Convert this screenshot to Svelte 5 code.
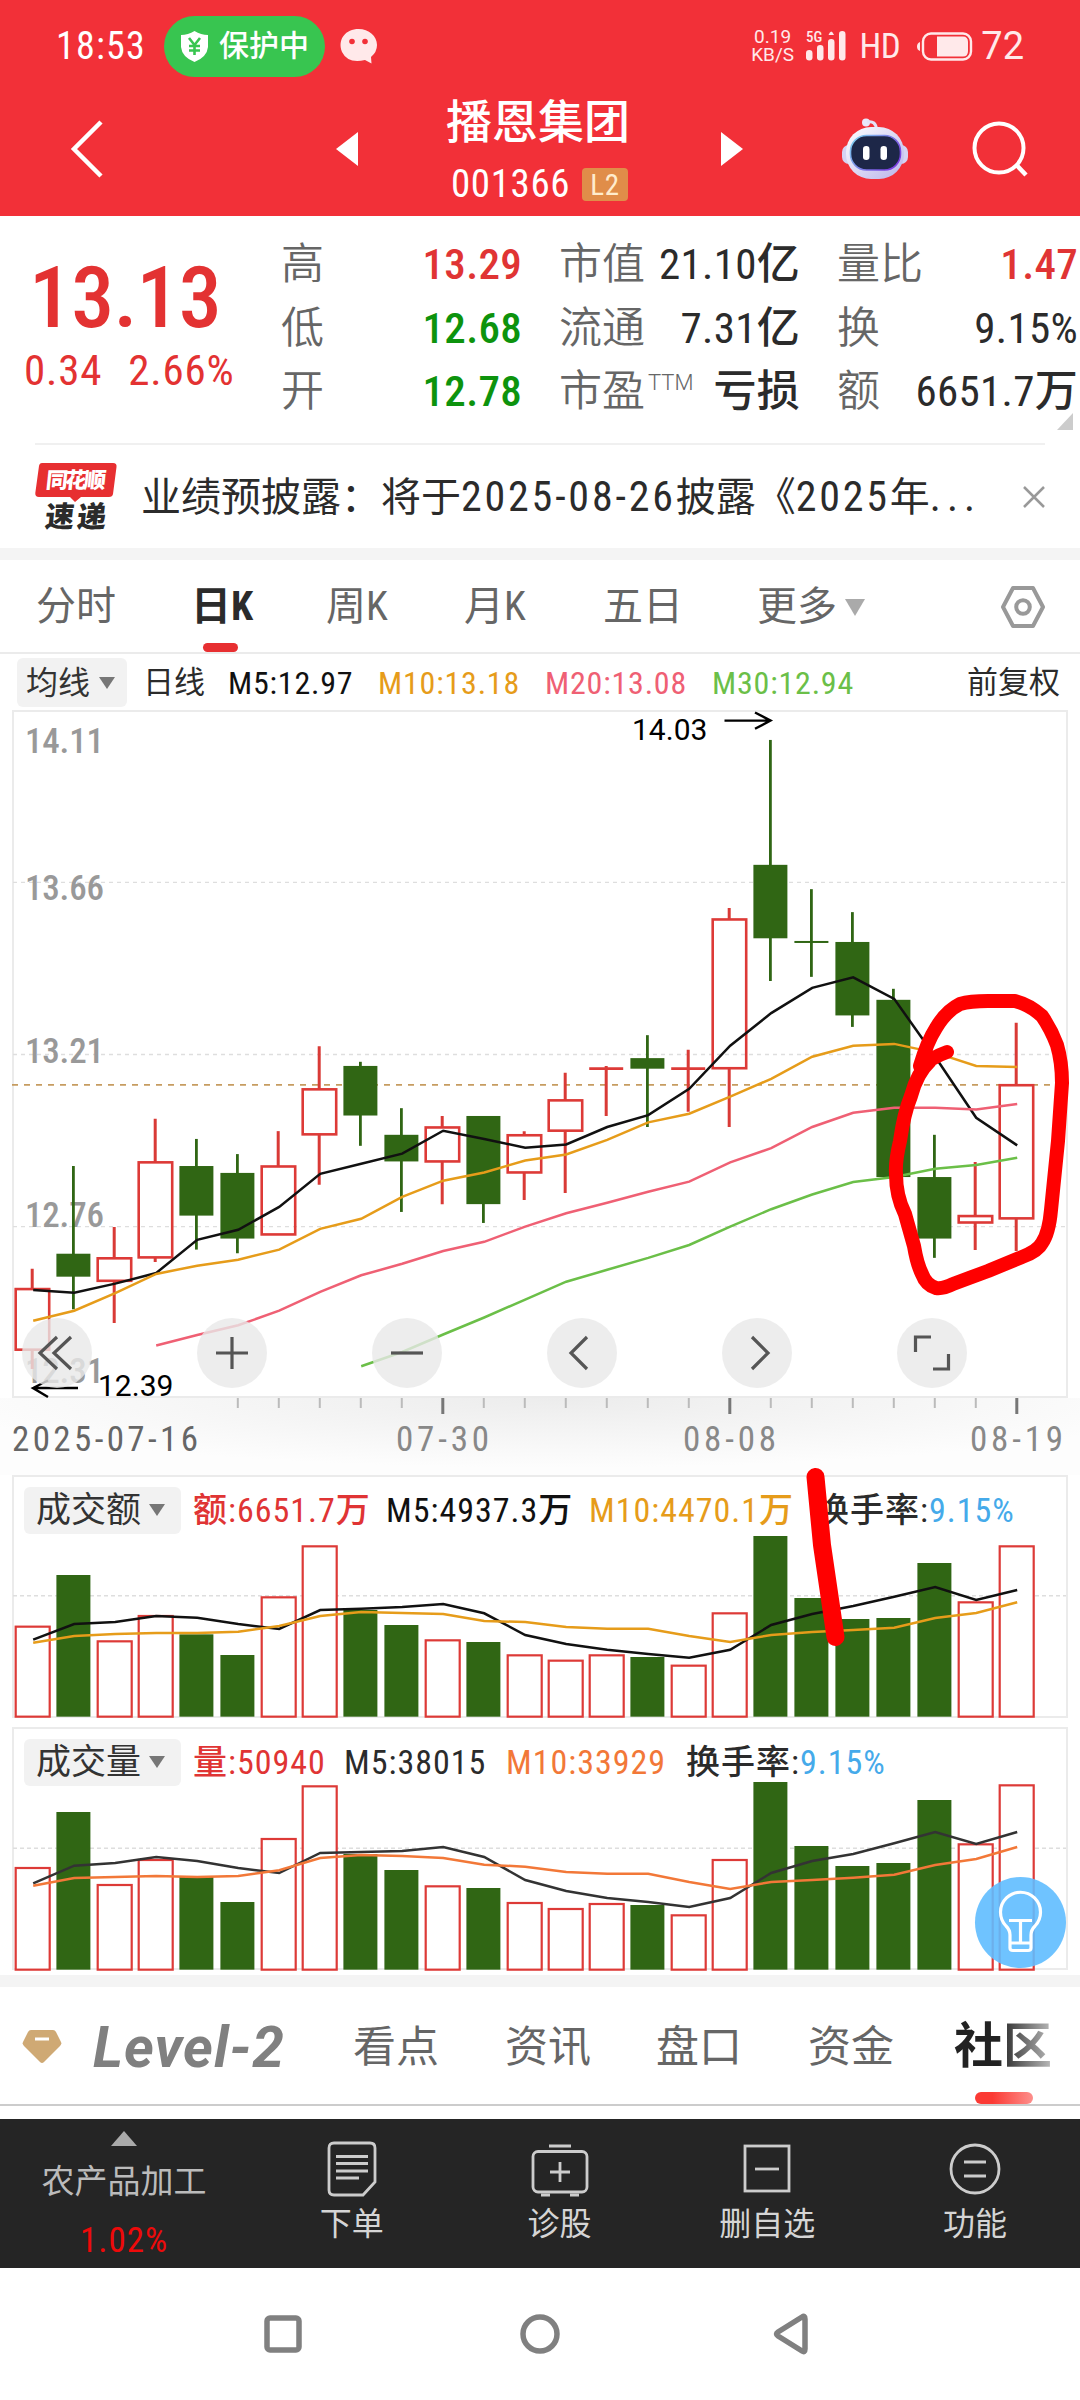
<script>
  const stats = [
    [
      { label: '高', value: '13.29', tone: 'up' },
      { label: '低', value: '12.68', tone: 'down' },
      { label: '开', value: '12.78', tone: 'down' },
    ],
    [
      { label: '市值', value: '21.10亿' },
      { label: '流通', value: '7.31亿' },
      { label: '市盈', sup: 'TTM', value: '亏损' },
    ],
    [
      { label: '量比', value: '1.47', tone: 'up' },
      { label: '换', value: '9.15%' },
      { label: '额', value: '6651.7万' },
    ],
  ];

  // Horizontal position of the n-th trading day.
  const cx = (i) => 32.2 + i * 41;

  // kind, high, body top, body bottom, low (2.178 units per pixel)
  const candles = [
    ['r', 1239, 1283, 1415, 1457], ['g', 1015, 1206, 1256, 1327], ['r', 1148, 1216, 1265, 1357],
    ['r', 912, 1007, 1214, 1224], ['g', 956, 1015, 1123, 1197], ['g', 989, 1030, 1173, 1205],
    ['r', 939, 1016, 1164, 1164], ['r', 754, 848, 946, 1056], ['g', 788, 797, 905, 971],
    ['g', 889, 947, 1005, 1115], ['r', 906, 931, 1005, 1098], ['g', 906, 906, 1098, 1139],
    ['r', 939, 948, 1029, 1089], ['r', 812, 872, 938, 1074], ['r', 797, 803, 803, 906],
    ['g', 730, 780, 803, 930], ['r', 762, 803, 803, 897], ['r', 453, 478, 802, 930],
    ['g', 87, 359, 519, 612], ['g', 412, 527, 527, 603], ['g', 462, 527, 687, 712],
    ['g', 629, 653, 1039, 1039], ['g', 947, 1039, 1173, 1215], ['r', 1006, 1124, 1138, 1198],
    ['r', 703, 839, 1129, 1200],
  ];
  const py = (v) => v / 2.178 - 11;

  const averages = [
    { color: '#111', from: 0, v: [1285, 1291, 1271, 1248, 1176, 1154, 1104, 1032, 1010, 988, 938, 956, 975, 968, 930, 904, 847, 753, 682, 627, 604, 651, 777, 910, 970] },
    { color: '#e69c1a', from: 0, v: [1352, 1330, 1292, 1250, 1232, 1219, 1197, 1152, 1130, 1082, 1047, 1029, 1003, 990, 958, 920, 901, 864, 825, 777, 753, 749, 768, 797, 799] },
    { color: '#ef6074', from: 3, v: [1406, 1383, 1362, 1330, 1289, 1253, 1228, 1200, 1180, 1147, 1118, 1095, 1071, 1049, 1007, 976, 930, 899, 888, 888, 892, 880] },
    { color: '#6bbf48', from: 8, v: [1451, 1420, 1382, 1345, 1306, 1267, 1241, 1215, 1187, 1147, 1109, 1077, 1050, 1039, 1021, 1013, 997] },
  ];
  const line = (v, from, f) => v.map((n, i) => `${cx(i + from).toFixed(1)},${f(n).toFixed(1)}`).join(' ');

  const grid = [882.3, 1054.5, 1226.6].map((y) => y - 711);
  const prices = [['14.11', 752.5], ['13.66', 900], ['13.21', 1063], ['12.76', 1227], ['12.31', 1383]];

  const panels = [
    {
      name: '成交额', top: 1475, base: 1380, floor: 1010, mid: 647, height: 243, colors: ['#111', '#e69c1a'],
      cells: [['额:6651.7万', 'up', 193], ['M5:4937.3万', 'm5', 203], ['M10:4470.1万', 'm10', 226]],
      bars: [740, 585, 784, 708, 763, 825, 652, 499, 690, 735, 781, 786, 826, 842, 826, 831, 857, 700, 468, 654, 717, 714, 549, 667, 499],
      m5: [779, 732, 726, 708, 713, 732, 747, 690, 686, 681, 672, 700, 765, 792, 809, 822, 833, 809, 735, 702, 678, 650, 621, 660, 630],
      m10: [788, 768, 762, 759, 759, 755, 738, 708, 696, 699, 702, 723, 726, 741, 746, 746, 768, 786, 765, 756, 750, 743, 714, 699, 667],
    },
    {
      name: '成交量', top: 1727, base: 1720, floor: 749, mid: 385, height: 243, colors: ['#333', '#f27838'],
      cells: [['量:50940', 'up', 151], ['M5:38015', 'dark', 162], ['M10:33929', 'orange', 180]],
      bars: [444, 276, 495, 420, 470, 546, 357, 199, 402, 450, 499, 504, 549, 567, 552, 555, 586, 420, 186, 378, 438, 429, 240, 373, 196],
      m5: [490, 437, 429, 411, 423, 444, 459, 399, 396, 393, 381, 411, 480, 513, 534, 546, 561, 534, 459, 423, 402, 370, 336, 372, 336],
      m10: [497, 474, 471, 468, 471, 468, 451, 414, 405, 408, 414, 434, 440, 456, 461, 461, 486, 507, 486, 480, 473, 464, 435, 417, 381],
    },
  ];

  const ticks = Array.from({ length: 20 }, (_, i) => i + 5);
  const major = [10, 17, 24];
</script>

<div class="page">
  <header>
    <div class="status">
      <span class="time">18:53</span>
      <span class="pill">
        <svg width="27" height="31" viewBox="0 0 27 31">
          <path d="M13.5 0Q20 4 27 4V16Q26 26 13.5 31Q1 26 0 16V4Q7 4 13.5 0Z" fill="#fff" />
          <path d="M8 7l5.500 7 5.500-7M13.500 14v10M8 15h11M8 19.500h11" fill="none" stroke="#38c550" stroke-width="2.600" />
        </svg>
        保护中
      </span>
      <svg class="chat" width="38" height="35" viewBox="0 0 38 35">
        <path d="M18.500 0C29 0 37 7 37 16Q37 23 31 28L31.500 34.500 25 31Q8 35 2 23C-3 10 6 0 18.500 0Z" fill="#ffe9ea" />
        <circle cx="12" cy="12.500" r="2.800" fill="#f23038" /><circle cx="25" cy="12.500" r="2.800" fill="#f23038" />
      </svg>
      <span class="rate"><span>0.19</span><span>KB/S</span></span>
      <svg class="signal" width="40" height="30" viewBox="0 0 40 30" fill="#ffe9ea">
        <text x="0" y="11" font-size="15" font-weight="500">5G</text>
        <rect y="19" width="6.500" height="10.500" rx="3.200" /><rect x="11" y="14" width="6.500" height="15.500" rx="3.200" />
        <rect x="22" y="8" width="6.500" height="21.500" rx="3.200" /><rect x="33" width="6.500" height="29.500" rx="3.200" />
        <path d="M22.500 4Q25.200-3 28 4Z" />
      </svg>
      <span class="hd">HD</span>
      <svg class="battery" width="56" height="29" viewBox="0 0 56 29">
        <path d="M3 10v9Q0 18 0 14.500T3 10Z" fill="#ffe9ea" />
        <rect x="6" y="1.500" width="48" height="26" rx="8" fill="none" stroke="#ffe9ea" stroke-width="2.400" />
        <path d="M20 4.500H46Q51 4.500 51 10V19Q51 24.500 46 24.500H20Z" fill="#ffe9ea" />
      </svg>
      <span class="level">72</span>
    </div>

    <div class="titlebar">
      <svg class="back" width="34" height="58" viewBox="0 0 34 58"><path d="M31 2L4 29 31 56" fill="none" stroke="#fff" stroke-width="4.500" /></svg>
      <svg width="22" height="34" viewBox="0 0 22 34"><path d="M22 0V34L0 17Z" fill="#fff" /></svg>
      <div class="title">
        <span class="name">播恩集团</span>
        <span class="code">001366 <b>L2</b></span>
      </div>
      <svg class="next" width="22" height="34" viewBox="0 0 22 34"><path d="M0 0L22 17 0 34Z" fill="#fff" /></svg>
      <svg width="66" height="62" viewBox="0 0 66 62">
        <defs>
          <linearGradient id="shell" x1="0" y1="0" x2="1" y2="1"><stop offset="0" stop-color="#fff" /><stop offset="1" stop-color="#b9b4ea" /></linearGradient>
          <linearGradient id="rim" x1="0" y1="0" x2="1" y2=".6"><stop offset="0" stop-color="#7fd8f0" /><stop offset="1" stop-color="#7a3fe0" /></linearGradient>
        </defs>
        <circle cx="24" cy="4.500" r="4" fill="#e9e8fa" />
        <path d="M25 4Q34 2 34.500 12" fill="none" stroke="#e4e2f8" stroke-width="3" />
        <rect x="0" y="27" width="66" height="19" rx="7" fill="#d5d3f3" />
        <rect x="4" y="9" width="58" height="52" rx="25" fill="url(#shell)" />
        <rect x="8.500" y="17.500" width="50" height="34.500" rx="16" fill="#1d2748" stroke="url(#rim)" stroke-width="1.600" />
        <rect x="21" y="28" width="6.500" height="14" rx="3.200" fill="#fff" /><rect x="38.500" y="28" width="6.500" height="14" rx="3.200" fill="#fff" />
      </svg>
      <svg width="56" height="56" viewBox="0 0 56 56"><circle cx="26" cy="27" r="24.500" fill="none" stroke="#fff" stroke-width="4" /><path d="M43 43.500L53 54" stroke="#fff" stroke-width="4.500" /></svg>
    </div>
  </header>

  <section class="quote">
    <div class="last">
      <span class="price">13.13</span>
      <span class="change"><span>0.34</span><span>2.66%</span></span>
    </div>
    {#each stats as column}
      <dl>
        {#each column as s}
          <div><dt>{s.label}{#if s.sup}<sup>{s.sup}</sup>{/if}</dt><dd class={s.tone}>{s.value}</dd></div>
        {/each}
      </dl>
    {/each}
    <i class="corner"></i>
  </section>

  <section class="news">
    <svg width="82" height="68" viewBox="0 0 82 68">
      <path d="M7 0H78Q82 0 81.500 4L78 31Q77.500 34 74 34H46L40 39 35 34H4Q0 34 .300 30L4 3Q4.500 0 7 0Z" fill="#e72f31" />
      <g transform="skewX(-6)" font-weight="900">
        <text x="13" y="25.500" font-size="22" textLength="60" fill="#fff">同花顺</text>
        <text x="16" y="64" font-size="29" textLength="61" fill="#2b2b2b">速递</text>
      </g>
    </svg>
    <p>业绩预披露：将于<span>2025-08-26</span>披露《<span>2025</span>年<span class="dots">...</span></p>
    <svg width="22" height="22" viewBox="0 0 22 22"><path d="M1 1L21 21M21 1L1 21" stroke="#999" stroke-width="2.500" /></svg>
  </section>

  <nav class="periods">
    <span>分时</span><span class="active">日K</span><span>周K</span><span>月K</span><span>五日</span><span class="more">更多<i></i></span>
    <svg width="46" height="44" viewBox="0 0 46 44" fill="none" stroke="#999" stroke-width="4"><path d="M13 3H33L43 22 33 41H13L3 22Z" stroke-linejoin="round" /><circle cx="23" cy="22" r="6.800" /></svg>
  </nav>

  <div class="legend">
    <span class="chip">均线<i></i></span><span class="dark">日线</span><span class="m5">M5:12.97</span><span class="m10">M10:13.18</span><span class="m20">M20:13.08</span><span class="m30">M30:12.94</span><span class="adjust">前复权</span>
  </div>

  <section class="chart">
    <svg width="1080" height="687" viewBox="0 0 1080 687">
      <rect x="13" y="0" width="1054" height="686" fill="none" stroke="#ebebeb" stroke-width="2" />
      {#each grid as y}<path d="M13 {y}H1066" stroke="#dedede" stroke-width="1.300" stroke-dasharray="4 4" />{/each}
      <path d="M12 373.800H1058" stroke="#c69c60" stroke-width="1.800" stroke-dasharray="6 6" />
      {#each prices as [label, y]}<text class="price-label" x="25" y={y - 711}>{label}</text>{/each}
      {#each candles as [kind, high, top, bottom, low], i}
        {#if kind === 'g'}
          <path d="M{cx(i) + .2} {py(high)}V{py(low)}" stroke="#306614" stroke-width="2.800" />
          <rect x={cx(i) - 16.8} y={py(top) - (top === bottom ? 1 : 0)} width="34" height={Math.max(2, py(bottom) - py(top))} fill="#306614" />
        {:else}
          <path d="M{cx(i)} {py(high)}V{py(top)}M{cx(i)} {py(bottom)}V{py(low)}" stroke="#d93a36" stroke-width="3" />
          {#if top === bottom}
            <path d="M{cx(i) - 17} {py(top)}h34" stroke="#dd3a37" stroke-width="2.800" />
          {:else}
            <rect x={cx(i) - 16.5} y={py(top)} width="33.500" height={py(bottom) - py(top)} fill="none" stroke="#dd3a37" stroke-width="2.600" />
          {/if}
        {/if}
      {/each}
      {#each averages as a}<polyline points={line(a.v, a.from, py)} transform="translate(1 0)" fill="none" stroke={a.color} stroke-width="2.500" />{/each}
      <g class="mark">
        <text x="632" y="29">14.03</text><path d="M724.500 9.600H770M755 1.500L770.500 9.600 755 17.800" />
        <text x="98" y="684.500">12.39</text><path d="M78 677H33M48 669.500L33 677 48 686" />
      </g>
    </svg>
    <div class="tools">
      <button aria-label="first"><svg viewBox="0 0 70 70"><path d="M35 19L18 35 35 51M49 19L32 35 49 51" /></svg></button>
      <button aria-label="zoom in"><svg viewBox="0 0 70 70"><path d="M19 35H51M35 19V51" /></svg></button>
      <button aria-label="zoom out"><svg viewBox="0 0 70 70"><path d="M19 35H51" /></svg></button>
      <button aria-label="previous"><svg viewBox="0 0 70 70"><path d="M40 19L24 35 40 51" /></svg></button>
      <button aria-label="next"><svg viewBox="0 0 70 70"><path d="M30 19L46 35 30 51" /></svg></button>
      <button aria-label="full screen"><svg viewBox="0 0 70 70"><path d="M34 19H18.500V34M36 51H51.500V36" /></svg></button>
    </div>
  </section>

  <svg class="dates" width="1080" height="77" viewBox="0 0 1080 77">
    {#each ticks as i}
      <path d="M{cx(i) + .6} 0V{major.includes(i) ? 16 : 10}" stroke={major.includes(i) ? '#777' : '#bbb'} stroke-width={major.includes(i) ? 3 : 2} />
    {/each}
    <text x="12" y="53" textLength="186" fill="#666">2025-07-16</text>
    <text x="396" y="53" textLength="93">07-30</text>
    <text x="683" y="53" textLength="93">08-08</text>
    <text x="970" y="53" textLength="93">08-19</text>
  </svg>

  {#each panels as p}
    {@const vy = (v) => p.base - p.top + v / 3}
    <section class="volume">
      <svg width="1080" height={p.height} viewBox="0 0 1080 {p.height}">
        <rect x="13" y="1" width="1054" height={p.height - 2} fill="none" stroke="#ebebeb" stroke-width="2" />
        <path d="M13 {vy(p.mid)}H1066" stroke="#dedede" stroke-width="1.500" stroke-dasharray="4 3" />
        {#each p.bars as v, i}
          {#if candles[i][0] === 'g'}
            <rect x={cx(i) - 16.8} y={vy(v)} width="34" height={vy(p.floor) - vy(v)} fill="#306614" />
          {:else}
            <rect x={cx(i) - 16.5} y={vy(v)} width="34" height={vy(p.floor) - vy(v)} fill="#fff" stroke="#dd3a37" stroke-width="2.200" />
          {/if}
        {/each}
        <g fill="none" stroke-width="2.500" transform="translate(1 0)">
          <polyline points={line(p.m5, 0, vy)} stroke={p.colors[0]} />
          <polyline points={line(p.m10, 0, vy)} stroke={p.colors[1]} />
        </g>
      </svg>
      <div class="volume-head">
        <span class="chip">{p.name}<i></i></span>
        {#each p.cells as [text, tone, width]}<span class="cell {tone}" style="width:{width}px">{text}</span>{/each}
        <span class="dark">换手率:<em>9.15%</em></span>
      </div>
    </section>
  {/each}

  <nav class="tabs">
    <svg width="40" height="36" viewBox="0 0 40 36"><path d="M9 1H31Q33 1 34 3L39 13Q40 15 38 17L22 33Q20 35 18 33L2 17Q0 15 1 13L6 3Q7 1 9 1Z" fill="#cfa974" /><path d="M13 10H27" stroke="#fff" stroke-width="3" /></svg>
    <span class="l2">Level-2</span>
    <span>看点</span><span>资讯</span><span>盘口</span><span>资金</span><span class="current"><b>社区</b></span>
  </nav>

  <footer>
    <div class="sector"><i></i><span>农产品加工</span><em>1.02%</em></div>
    <div class="action">
      <svg width="60" height="56" viewBox="0 0 60 56"><path d="M12 2H48Q53 2 53 7V41L41 54H12Q7 54 7 49V7Q7 2 12 2Z" /><path d="M14 15.500H46M14 22.500H46M14 30H46M14 37H37" /></svg>下单
    </div>
    <div class="action">
      <svg width="60" height="56" viewBox="0 0 60 56"><rect x="3" y="10.500" width="54" height="40.500" rx="5" /><path d="M19 5H41M30 21V41M20 31H40M11 54H20M40 54H49" /></svg>诊股
    </div>
    <div class="action">
      <svg width="60" height="56" viewBox="0 0 60 56"><rect x="8" y="5" width="44" height="45" /><path d="M18 28H42" /></svg>删自选
    </div>
    <div class="action">
      <svg width="60" height="56" viewBox="0 0 60 56"><circle cx="30" cy="28" r="24" /><path d="M19 21H41M19 35H41" /></svg>功能
    </div>
  </footer>

  <div class="system">
    <svg width="40" height="42" viewBox="0 0 40 42"><rect x="4" y="5" width="32" height="32" rx="3" /></svg>
    <svg width="42" height="42" viewBox="0 0 42 42"><circle cx="21" cy="21" r="17" /></svg>
    <svg width="36" height="42" viewBox="0 0 36 42"><path d="M29 4Q32 2 32 6V36Q32 40 29 38L5 23Q2 21 5 19Z" /></svg>
  </div>

  <div class="hint">
    <svg width="91" height="91" viewBox="0 0 91 91" fill="none" stroke="#fff" stroke-width="3.200">
      <path d="M35 65V58Q35 53 31 49A20 20 0 1 1 60 49Q56 53 56 58V65M34 43.500H57M45.500 44V66M35 66H56V71Q56 73.500 53 73.500H38Q35 73.500 35 71Z" />
    </svg>
  </div>

  <svg class="ink" width="1080" height="2400" viewBox="0 0 1080 2400">
    <path d="M947 1052Q930 1058 921 1068L920 1066Q927 1042 936 1028Q946 1011 960 1004Q970 1001 988 1001H1015Q1030 1005 1042 1016Q1051 1029 1057 1045Q1062 1062 1062 1083L1058 1141 1051 1210Q1049 1233 1042 1243Q1038 1251 1022 1257L988 1271 953 1284Q943 1289 936 1288Q926 1285 922 1274Q917 1264 914 1246L905 1214Q896 1196 896 1174Q895 1162 900 1141Q904 1113 911 1096Q917 1073 930 1061" stroke-width="14" />
    <path d="M815.500 1477L822 1545 835.500 1637" stroke-width="18" />
  </svg>
</div>

<style>
  :global(body) { background: #fff; }
  .page {
    position: relative; width: 1080px; height: 2400px; overflow: hidden; background: #fff; color: #2b2b2b;
    font-family: Roboto, "Noto Sans CJK SC", sans-serif; font-stretch: 75%; line-height: 1;
  }
  svg { display: block; flex: none; overflow: visible; }
  .up { color: #e03434; }
  .down { color: #0d930d; }
  .m5 { color: #111; }
  .m10 { color: #e69c1a; }
  .m20 { color: #ef6074; }
  .m30 { color: #6bbf48; }
  .dark { color: #2b2b2b; }
  .orange { color: #f27838; }

  header { height: 216px; background: #f23038; color: #fff; }
  .status { display: flex; align-items: center; height: 92px; padding: 0 56px; color: #ffe9ea; }
  .time { width: 108px; font-size: 38px; letter-spacing: 1.2px; color: #fff; }
  .pill { display: flex; align-items: center; gap: 11px; width: 161px; height: 61px; padding: 0 16px 0 17px; box-sizing: border-box; border-radius: 31px; background: #38c550; color: #fff; font-size: 30px; font-weight: 500; white-space: nowrap; }
  .chat { margin-left: 15px; }
  .rate { display: flex; flex-direction: column; align-items: center; gap: 0; width: 46px; margin-left: auto; font-size: 19px; font-stretch: 95%; font-weight: 450; line-height: 18px; }
  .signal { margin-left: 10px; }
  .hd { margin-left: 14px; font-size: 35px; letter-spacing: -.5px; }
  .battery { margin-left: 17px; }
  .level { margin-left: 8px; font-size: 38px; font-stretch: 95%; font-weight: 450; }
  .titlebar { display: grid; grid-template-columns: 336px 112px 180px 214px 131px 1fr; align-items: center; height: 114px; }
  .back { margin-left: 70px; }
  .next { margin-left: 93px; }
  .title { display: flex; flex-direction: column; align-items: center; gap: 23px; padding-top: 2px; }
  .name { font-size: 46px; font-weight: 500; white-space: nowrap; }
  .code { display: flex; align-items: center; justify-content: space-between; width: 177px; height: 33px; margin-left: 3px; font-size: 39px; font-weight: 450; letter-spacing: .6px; }
  .code b { width: 46px; height: 33px; border-radius: 4px; background: #e08d49; color: #ffeccd; font-size: 29px; font-weight: 400; line-height: 34px; text-align: center; }

  .quote { position: relative; display: flex; height: 227px; padding: 17px 0 0 19px; box-sizing: border-box; }
  .last { display: flex; flex: none; flex-direction: column; width: 262px; padding-top: 22px; box-sizing: border-box; color: #e33232; }
  .price { padding-left: 10px; font-size: 86px; font-weight: 500; letter-spacing: -.8px; }
  .change { display: flex; gap: 26px; padding: 8px 0 0 5px; font-size: 43px; font-weight: 450; letter-spacing: .8px; }
  dl { width: 241px; margin: 0 37px 0 0; flex: none; }
  dl div { display: flex; justify-content: space-between; align-items: center; height: 63.500px; font-size: 43px; }
  dt { color: #666; font-weight: 350; white-space: nowrap; }
  dd { margin: 0; font-weight: 500; letter-spacing: .3px; white-space: nowrap; }
  dd:not(.up, .down) { color: #2b2b2b; font-weight: 450; }
  sup { display: inline-block; margin-left: 3px; vertical-align: 16px; font-size: 22px; font-stretch: 100%; line-height: 0; }
  .corner { position: absolute; right: 7px; bottom: 13px; border: solid transparent; border-width: 0 0 17px 16px; border-bottom-color: #ccc; }

  .news { display: flex; align-items: center; height: 105px; margin: 0 35px; border-top: 2px solid #f0f0f0; box-sizing: border-box; }
  .news p { flex: 1; margin: 0 0 0 24px; font-size: 40px; white-space: nowrap; }
  .news span { font-size: 42px; letter-spacing: 2.800px; }
  .news .dots { letter-spacing: 6px; }

  .periods { position: relative; display: grid; grid-template-columns: 155px 135px 138px 139px 154px 243px 1fr; align-items: center; height: 106px; padding: 2px 0 0 36px; border-top: 12px solid #f4f4f4; border-bottom: 2px solid #ebebeb; box-sizing: border-box; font-size: 40px; color: #666; }
  .periods .active { position: relative; color: #2b2b2b; font-weight: 700; }
  .periods .active::after { content: ''; position: absolute; left: 12px; top: 56px; width: 35px; height: 9px; border-radius: 5px; background: #e72f31; }
  .more { display: flex; align-items: center; gap: 8px; }
  .more i { border: solid transparent; border-width: 17px 10.500px 0; border-top-color: #aaa; }

  .legend { display: grid; grid-template-columns: 126px 85px 150px 167px 167px 255px 1fr; align-items: center; height: 57px; padding-left: 17px; font-size: 32px; font-weight: 450; letter-spacing: .8px; white-space: nowrap; }
  .legend .dark, .adjust { font-size: 31px; font-weight: 400; letter-spacing: 0; }
  .chip { display: flex; align-items: center; gap: 9px; width: 110px; height: 49px; padding: 0 0 0 9px; box-sizing: border-box; border-radius: 6px; background: #f2f2f2; color: #333; font-weight: 400; letter-spacing: 0; }
  .chip i { border: solid transparent; border-width: 12px 8.500px 0; border-top-color: #777; }

  .chart { position: relative; height: 687px; }
  .price-label { font-size: 35px; font-weight: 500; fill: #999; letter-spacing: -.2px; }
  .mark { fill: #000; font-size: 30px; font-stretch: 100%; }
  .mark path { fill: none; stroke: #000; stroke-width: 2.400; }
  .tools { position: absolute; left: 22px; top: 607px; display: flex; gap: 105px; }
  .tools button { width: 70px; height: 70px; padding: 0; border: 0; border-radius: 50%; background: rgba(232, 232, 232, .8); }
  .tools path { fill: none; stroke: #555; stroke-width: 3.200; }

  .dates { background: radial-gradient(ellipse 620px 70px at 560px 0, #ececec, #f9f9f9 75%, #fdfdfd); font-size: 35px; font-weight: 450; fill: #888; }

  .volume { display: grid; height: 243px; margin-bottom: 9px; }
  .volume > * { grid-area: 1 / 1; }
  .volume-head { display: flex; align-items: center; align-self: start; height: 48px; margin: 11px 0 0 24px; font-size: 34px; font-weight: 450; letter-spacing: 1px; white-space: nowrap; position: relative; }
  .volume-head .chip { width: 157px; height: 47px; margin-right: 12px; padding-left: 12px; font-size: 35px; gap: 8px; }
  .cell { flex: none; }
  em { font-style: normal; color: #45aaea; }

  .tabs { display: grid; grid-template-columns: 71px 260px 152px 151px 152px 146px 1fr; align-items: center; height: 131px; margin-top: -4px; padding: 3px 0 0 22px; border-top: 12px solid #f4f4f4; border-bottom: 2px solid #ccc; box-sizing: border-box; font-size: 43px; color: #666; }
  .l2 { font-size: 57px; font-weight: 700; font-style: italic; font-stretch: 100%; letter-spacing: 1px; color: #808080; }
  .current { position: relative; width: 98px; font-size: 49px; white-space: nowrap; }
  .current b { display: block; line-height: 60px; color: transparent; background: linear-gradient(90deg, #222 45%, #bbb); background-clip: text; }
  .current::after { content: ''; position: absolute; left: 21px; top: 75px; width: 58px; height: 12px; border-radius: 6px; background: linear-gradient(90deg, #fb3a34 30%, #fd8f8c); }

  footer { display: grid; grid-template-columns: 248px repeat(4, 207.700px); height: 149px; margin-top: 13px; background: #252525; color: #d5d5d5; }
  .sector { display: flex; flex-direction: column; align-items: center; padding-top: 12px; font-size: 33px; color: #bbb; }
  .sector i { border: solid transparent; border-width: 0 13px 15px; border-bottom-color: #aaa; }
  .sector span { margin-top: 19px; }
  .sector em { margin-top: 25px; color: #ee0a0a; font-size: 35px; letter-spacing: 1px; }
  .action { display: flex; flex-direction: column; align-items: center; gap: 11px; padding-top: 22px; font-size: 32px; }
  .action svg { fill: none; stroke: #ccc; stroke-width: 2.800; }

  .system { display: flex; align-items: center; height: 132px; padding-left: 263px; }
  .system svg { fill: none; stroke: #808080; stroke-width: 5.500; }
  .system svg:nth-child(2) { margin-left: 216px; }
  .system svg:nth-child(3) { margin-left: 212px; }

  .hint { position: absolute; left: 975px; top: 1877px; border-radius: 50%; background: rgba(95, 189, 255, .9); }
  .ink { position: absolute; left: 0; top: 0; pointer-events: none; fill: none; stroke: #f00; stroke-linecap: round; stroke-linejoin: round; }
</style>
